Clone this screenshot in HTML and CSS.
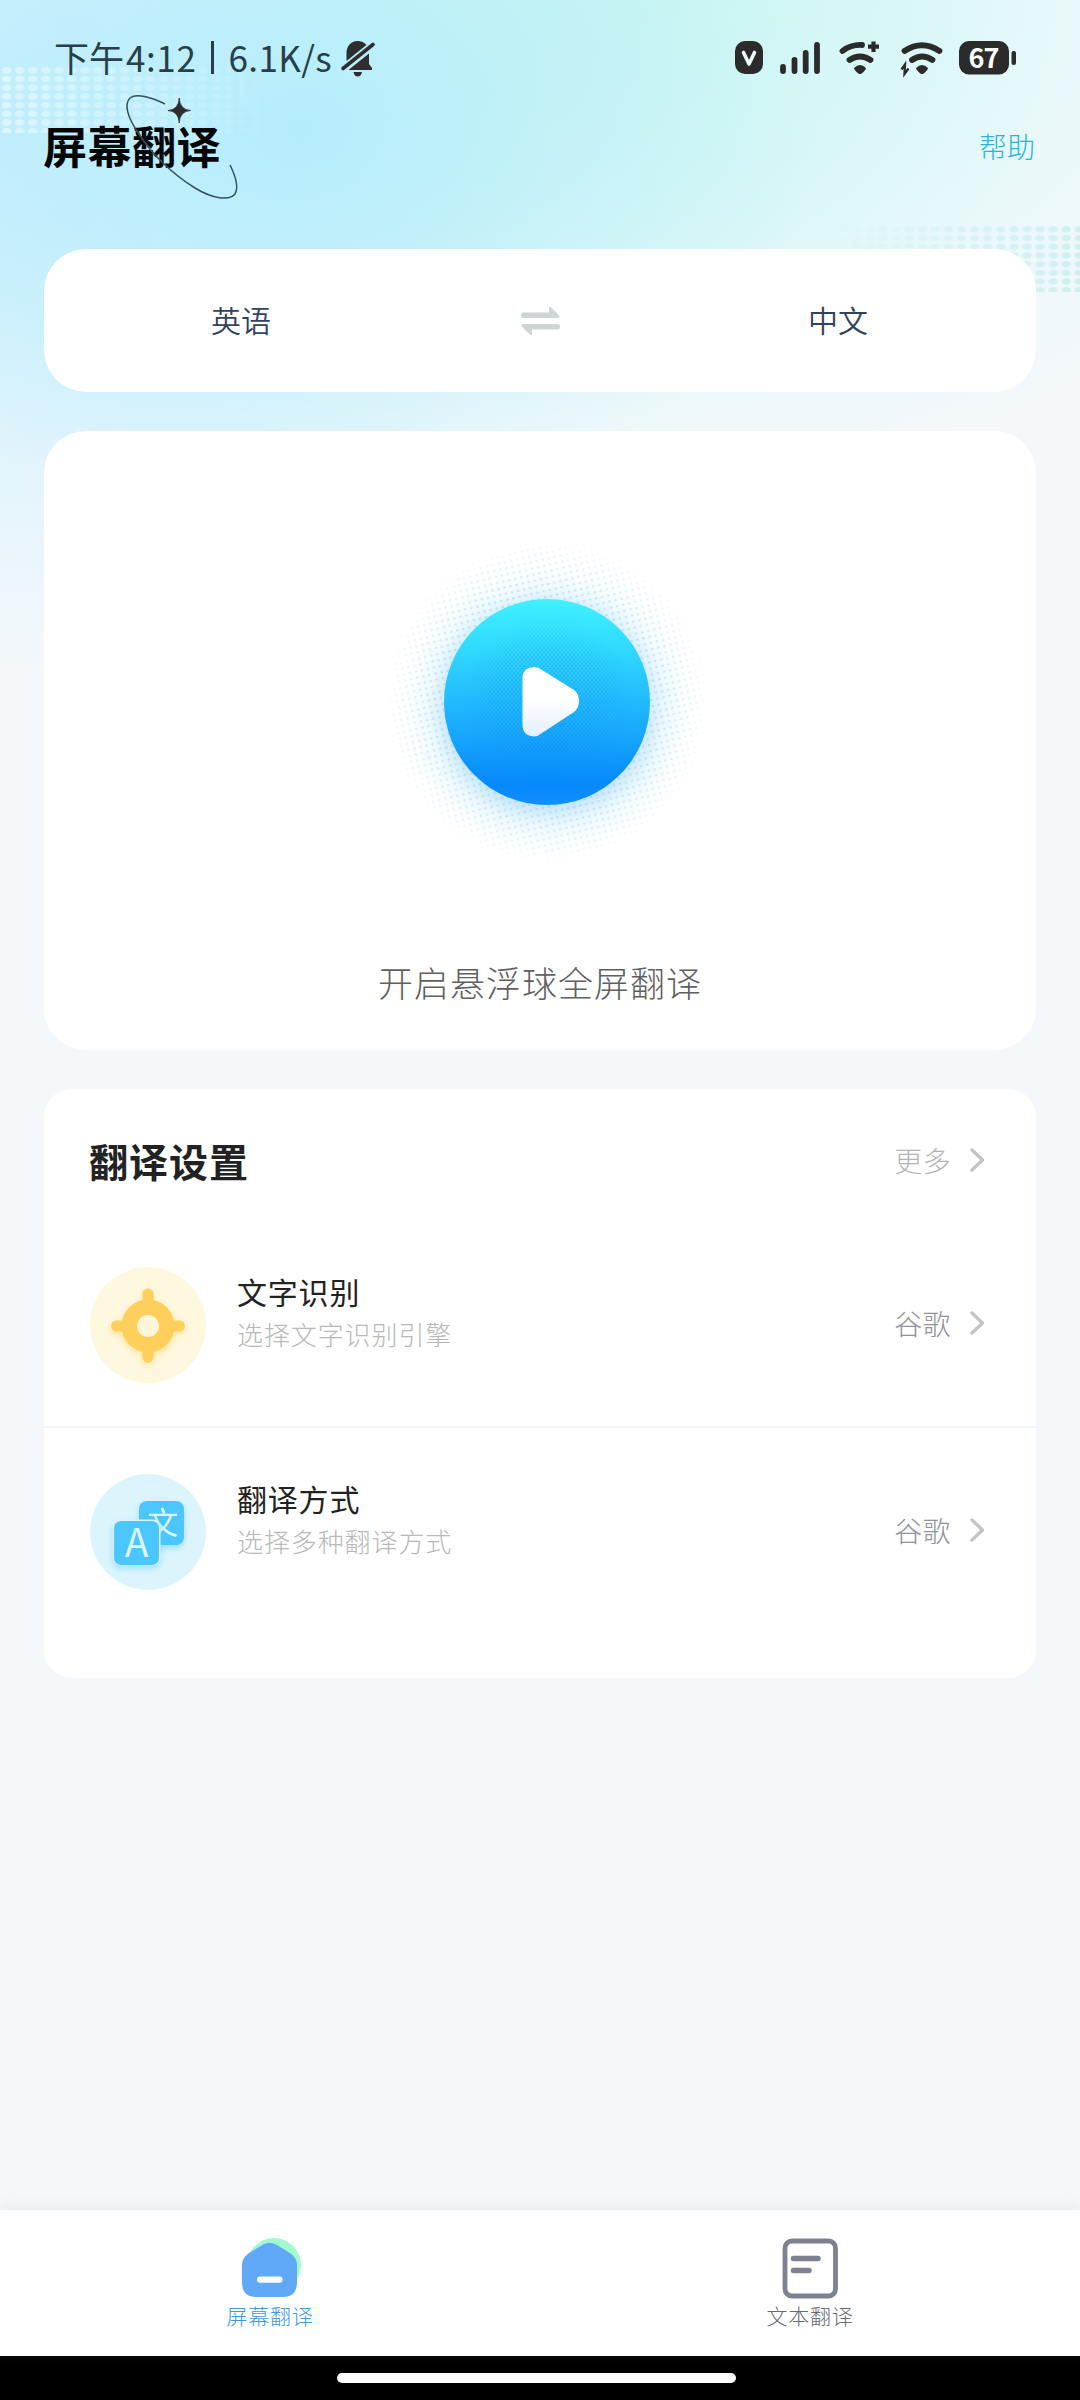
FILE: index.html
```html
<!DOCTYPE html>
<html lang="zh-CN">
<head>
<meta charset="utf-8">
<title>屏幕翻译</title>
<link rel="stylesheet" href="styles.css">
</head>
<body>
<div class="screen">
  <div class="dots dots-left"></div>
  <div class="dots dots-right"></div>
  <div class="status">
    <div class="status-left">
      <span class="cn">下午</span><span class="time">4:12</span><span class="bar"></span><span class="speed">6.1K/s</span>
      <svg class="bell" width="34" height="38" viewBox="0 0 34 38"><path fill="#2e2e2e" d="M5.500 21V13C5.500 6 10 1 16.500 1Q22 1 25.500 5L5.500 21ZM8 29.500L28 13.500V24L31 28V30H8Z"/><path d="M2 28.500L32 4.500" stroke="#2e2e2e" stroke-width="3.600" stroke-linecap="round"/><path d="M12.500 32H21Q20 36.500 16.700 36.500Q13.500 36.500 12.500 32Z" fill="#2e2e2e"/></svg>
    </div>
    <svg class="status-icons" width="282" height="46" viewBox="735 34 282 46">
      <rect x="735" y="40" width="28" height="33" rx="10" fill="#2b2b2b"/>
      <path d="M743.500 51.500L749 63L754.500 51.500" fill="none" stroke="#e9fbfa" stroke-width="3.600" stroke-linecap="round" stroke-linejoin="round"/>
      <g stroke="#2b2b2b" stroke-width="5.800" stroke-linecap="round" fill="none">
        <path d="M783 66V70M794.500 59V70M805.700 52V70M817 44V70"/>
        <path d="M842.500 50Q851 43.500 862 44M849.500 59Q860 52 870.500 59"/>
        <path d="M873.500 40.500V51M868 45.700H879" stroke-width="4.200" stroke-linecap="butt"/>
        <path d="M904.500 50Q922 38.500 939.500 50M912 59Q922 52 932.500 59"/>
      </g>
      <path d="M854 67Q860 61 866 67Q866 69 861 73H859Q854 69 854 67ZM916 67Q922 61 928 67Q928 69 923 73H921Q916 69 916 67Z" fill="#2b2b2b"/>
      <path d="M901.500 68.500L905 63.500L904.500 73L908.500 67.500" fill="none" stroke="#2b2b2b" stroke-width="2.300"/>
      <rect x="959" y="40" width="50" height="33.500" rx="10" fill="#2b2b2b"/>
      <rect x="1011.500" y="50" width="4.500" height="14" rx="2" fill="#2b2b2b"/>
      <text x="983.500" y="66.500" text-anchor="middle" class="battery">67</text>
    </svg>
  </div>
  <header class="head">
    <h1>屏幕翻译</h1>
    <svg class="orbit" width="120" height="110" viewBox="122 92 120 110" fill="none"><path d="M165 104C151 97 136 93 130 98C124 104 127 117 139 134C152 155 174 175 195 188C213 199 229 201 235 194C239 187 236 177 230 165" stroke="#32525c" stroke-width="1.500"/><path d="M179.200 98Q179.700 109.700 190.500 110.500Q179.700 111.300 179.200 123Q178.700 111.300 168 110.500Q178.700 109.700 179.200 98Z" fill="#2d2d2d" stroke="#2d2d2d" stroke-width=".8"/></svg>
    <span class="help">帮助</span>
  </header>
  <main>
    <section class="card langs">
      <span>英语</span>
      <svg width="42" height="30" viewBox="0 0 42 30" fill="#cfd4d5"><path d="M3 6.500H29V2Q29 0 31 1.200L39 9.500Q40.500 12 37 12H3Q1 12 1 9.200Q1 6.500 3 6.500ZM38 23.500H12V28Q12 30 10 28.800L2 20.500Q0.500 18 4 18H38Q40 18 40 20.800Q40 23.500 38 23.500Z"/></svg>
      <span>中文</span>
    </section>
    <section class="card launch">
      <svg class="play" width="330" height="330" viewBox="-165 -165 330 330">
        <defs>
          <linearGradient id="ball" x1="0" y1="0" x2="0" y2="1"><stop offset="0" stop-color="#40f1fe"/><stop offset=".2" stop-color="#32defd"/><stop offset=".55" stop-color="#1fb4fd"/><stop offset=".9" stop-color="#0789fc"/><stop offset="1" stop-color="#1090fc"/></linearGradient>
          <linearGradient id="tri" x1="0" y1="0" x2="0" y2="1"><stop offset=".45" stop-color="#fff"/><stop offset="1" stop-color="#e5eeff"/></linearGradient>
          <radialGradient id="fade"><stop offset=".6" stop-color="#fff"/><stop offset=".8" stop-color="#fff" stop-opacity=".5"/><stop offset="1" stop-color="#fff" stop-opacity="0"/></radialGradient>
          <radialGradient id="soft"><stop offset="0" stop-color="#fff"/><stop offset=".6" stop-color="#fff" stop-opacity=".7"/><stop offset="1" stop-color="#fff" stop-opacity="0"/></radialGradient>
          <radialGradient id="glow"><stop offset=".6" stop-color="#8accf3" stop-opacity=".7"/><stop offset=".8" stop-color="#b4e4fa" stop-opacity=".25"/><stop offset="1" stop-color="#d5f6ff" stop-opacity="0"/></radialGradient>
          <pattern id="halo" width="6.200" height="6.200" patternUnits="userSpaceOnUse" patternTransform="rotate(-13)"><circle cx="3" cy="3" r="1.300" fill="#c0dcee"/></pattern>
          <pattern id="grain" width="4" height="4.600" patternUnits="userSpaceOnUse"><circle cx="1" cy="1" r=".8" fill="#087ce0"/><circle cx="3" cy="3.300" r=".8" fill="#087ce0"/></pattern>
          <mask id="m1"><circle r="164" fill="url(#fade)"/></mask>
          <mask id="m2"><circle r="86" fill="url(#soft)"/></mask>
        </defs>
        <circle r="164" fill="url(#halo)" mask="url(#m1)"/>
        <circle cy="6" r="148" fill="url(#glow)"/>
        <circle r="103" fill="url(#ball)"/>
        <circle r="86" fill="url(#grain)" mask="url(#m2)" opacity=".6"/>
        <path d="M-24.500-24Q-24.500-34-13-35Q-9-35-5-32L27-12Q32-8 32-1Q32 6 27 10L-5 31Q-9 34.500-13 34.500Q-24.500 33.500-24.500 23Z" fill="url(#tri)"/>
      </svg>
      <p>开启悬浮球全屏翻译</p>
    </section>
    <section class="card settings">
      <div class="settings-head"><h2>翻译设置</h2><span class="more">更多</span><svg class="chev" width="15" height="24" viewBox="0 0 15 24"><path d="M2 2L12.500 12L2 22"/></svg></div>
      <div class="row">
        <svg width="116" height="116" viewBox="0 0 116 116"><circle cx="58" cy="58" r="58" fill="#fef8df"/><g class="shadow-gold"><path d="M58 27V90M26.500 59H89.500" stroke="#fed05b" stroke-width="11" stroke-linecap="round"/><circle cx="58" cy="59" r="26.500" fill="#fed05b"/></g><circle cx="58" cy="59" r="11" fill="#fef5d8"/></svg>
        <div class="label"><b>文字识别</b><small>选择文字识别引擎</small></div>
        <span class="value">谷歌</span><svg class="chev" width="15" height="24" viewBox="0 0 15 24"><path d="M2 2L12.500 12L2 22"/></svg>
      </div>
      <div class="row row-last">
        <svg width="116" height="116" viewBox="0 0 116 116"><circle cx="58" cy="58" r="58" fill="#dcf5fd"/><g class="shadow-blue"><rect x="49" y="27" width="45" height="44" rx="8" fill="#4bc6ff"/><text x="73" y="60" text-anchor="middle" class="glyph-wen">文</text></g><g class="shadow-blue"><rect x="23" y="45.500" width="47.500" height="46" rx="8" fill="#dcf5fd"/><rect x="24" y="47" width="45" height="44" rx="7" fill="#4bc6ff"/></g><text x="46.500" y="83" text-anchor="middle" class="glyph-a">A</text></svg>
        <div class="label"><b>翻译方式</b><small>选择多种翻译方式</small></div>
        <span class="value">谷歌</span><svg class="chev" width="15" height="24" viewBox="0 0 15 24"><path d="M2 2L12.500 12L2 22"/></svg>
      </div>
    </section>
  </main>
  <nav>
    <div class="tab active"><svg width="60" height="62" viewBox="0 0 60 62"><circle cx="34" cy="27" r="27" fill="#a1f9cf"/><path d="M23 6.500Q29.500 3 36 6.500L50 15Q57 20 57 27V44Q57 59 43 59H16Q2 59 2 44V27Q2 20 9 15Z" fill="#5fa9f8"/><rect x="17" y="38.500" width="25.500" height="6.300" rx="3" fill="#fff"/></svg><span>屏幕翻译</span></div>
    <div class="tab"><svg width="60" height="62" viewBox="0 0 60 62" fill="none" stroke="#7d8190"><rect x="5" y="3" width="50.500" height="55" rx="7" stroke-width="4.800"/><path d="M13.500 20.500H38M13.500 32.500H29" stroke-width="5.500" stroke-linecap="round"/></svg><span>文本翻译</span></div>
  </nav>
  <footer><i></i></footer>
</div>
</body>
</html>
```
FILE: styles.css
```css
* { box-sizing: border-box; margin: 0; padding: 0; }
body { font-family: "Noto Sans CJK SC", sans-serif; }
.screen {
  position: relative; width: 1080px; height: 2400px; overflow: hidden;
  display: flex; flex-direction: column;
  background:
    radial-gradient(ellipse 520px 400px at 300px 130px, rgba(178,236,251,.9), rgba(178,236,251,0)),
    radial-gradient(ellipse 460px 460px at 620px -40px, rgba(202,246,240,1), rgba(202,246,240,0)),
    radial-gradient(ellipse 560px 560px at 0 120px, rgba(200,238,254,1), rgba(200,238,254,0)),
    radial-gradient(ellipse 900px 520px at 500px 0, rgba(214,248,250,1), rgba(214,248,250,0)),
    #f4f8fb;
}
.dots { position: absolute; height: 67px; background-size: 13.100px 8.700px; }
.dots-left { left: 0; top: 66px; width: 290px; background-image: radial-gradient(ellipse 5.500px 3.800px at center, rgba(235,252,255,.6) 75%, transparent); -webkit-mask-image: linear-gradient(90deg, #000, transparent); mask-image: linear-gradient(90deg, #000, transparent); }
.dots-right { right: 0; top: 225px; width: 256px; background-image: radial-gradient(ellipse 5.500px 3.600px at center, rgba(196,236,236,.75) 70%, transparent); -webkit-mask-image: linear-gradient(270deg, #000, transparent); mask-image: linear-gradient(270deg, #000, transparent); }
.status { position: relative; height: 112px; padding: 0 64px 0 54px; display: flex; justify-content: space-between; align-items: center; color: #263f49; }
.status-left { display: flex; align-items: center; font-size: 35px; line-height: 52px; padding-top: 1px; }
.time { letter-spacing: .6px; margin-left: 2px; }
.bar { width: 3px; height: 33px; margin: 2px 14px 0 15px; background: #263f49; }
.speed { letter-spacing: .4px; }
.bell { margin: 5px 0 0 9px; }
.status-icons { margin-top: 3px; margin-right: -1px; }
.battery { font: 700 27px "Noto Sans CJK SC", sans-serif; fill: #fff; letter-spacing: -1px; }
.head { position: relative; height: 137px; padding: 1px 45px 0 43px; display: flex; justify-content: space-between; align-items: flex-start; }
h1 { font-size: 44px; line-height: 64px; letter-spacing: .5px; font-weight: 700; color: #060606; }
.orbit { position: absolute; left: 122px; top: -20px; }
.help { font-size: 28px; line-height: 40px; margin-top: 13px; font-weight: 300; color: #27b5e0; }
main { position: relative; padding: 0 44px; display: flex; flex-direction: column; gap: 39px; flex: 1; }
.card { background: #fff; border-radius: 42px; }
.langs { height: 143px; display: grid; grid-template-columns: 394px 1fr 396px; align-items: center; justify-items: center; font-size: 30px; font-weight: 350; color: #30435f; }
.langs span { margin-top: -3px; }
.langs svg { margin-left: 3px; }
.launch { height: 619px; display: flex; flex-direction: column; align-items: center; padding-top: 106px; }
.play { margin-left: 14px; }
.launch p { margin-top: 89px; font-size: 35px; line-height: 52px; letter-spacing: 1px; font-weight: 300; color: #5f5f5f; }
.settings { height: 589px; border-radius: 28px; }
.settings-head { height: 143px; padding: 0 51px 2px 45px; display: flex; align-items: center; }
h2 { font-size: 39px; line-height: 56px; letter-spacing: 1px; font-weight: 700; color: #222; flex: 1; }
.more, .value { font-size: 28px; font-weight: 300; color: #b4b4b4; margin-right: 19px; letter-spacing: .4px; }
.value { color: #92929a; }
.chev { fill: none; stroke: #c4c4c4; stroke-width: 3.300; stroke-linecap: round; stroke-linejoin: round; }
.row { height: 196px; padding: 35px 51px 0 46px; display: flex; align-items: flex-start; border-bottom: 2px solid #f4f5f6; }
.row-last { border: 0; padding-top: 46px; }
.row .value { margin-top: 35px; line-height: 42px; }
.row .chev { margin-top: 44px; }
.label { flex: 1; margin-left: 31px; padding-top: 2px; }
.label b, .label small { display: block; }
.label b { font-size: 30px; line-height: 45px; letter-spacing: .8px; font-weight: 400; color: #222; }
.label small { font-size: 26px; line-height: 40px; letter-spacing: .9px; font-weight: 300; color: #b8b8b8; }
.shadow-gold { filter: drop-shadow(0 3px 3px rgba(254,208,91,.5)); }
.shadow-blue { filter: drop-shadow(0 3px 3px rgba(75,198,255,.45)); }
.glyph-wen { font-size: 31px; fill: #dcf5fd; }
.glyph-a { font: 400 39px "Noto Sans CJK SC", sans-serif; fill: #dcf5fd; }
nav { position: relative; height: 146px; background: #fff; display: grid; grid-template-columns: 1fr 1fr; box-shadow: 0 -2px 12px rgba(120,140,150,.12); }
.tab { display: flex; flex-direction: column; align-items: center; padding-top: 28px; font-size: 21px; font-weight: 300; letter-spacing: .7px; line-height: 32px; color: #666a75; }
.tab svg { margin-bottom: -1px; overflow: visible; }
.active { color: #3f97dc; }
footer { height: 44px; background: #000; display: flex; justify-content: center; padding-top: 17px; }
footer i { width: 399px; height: 10px; border-radius: 5px; background: #fff; margin-right: 7px; }
```
